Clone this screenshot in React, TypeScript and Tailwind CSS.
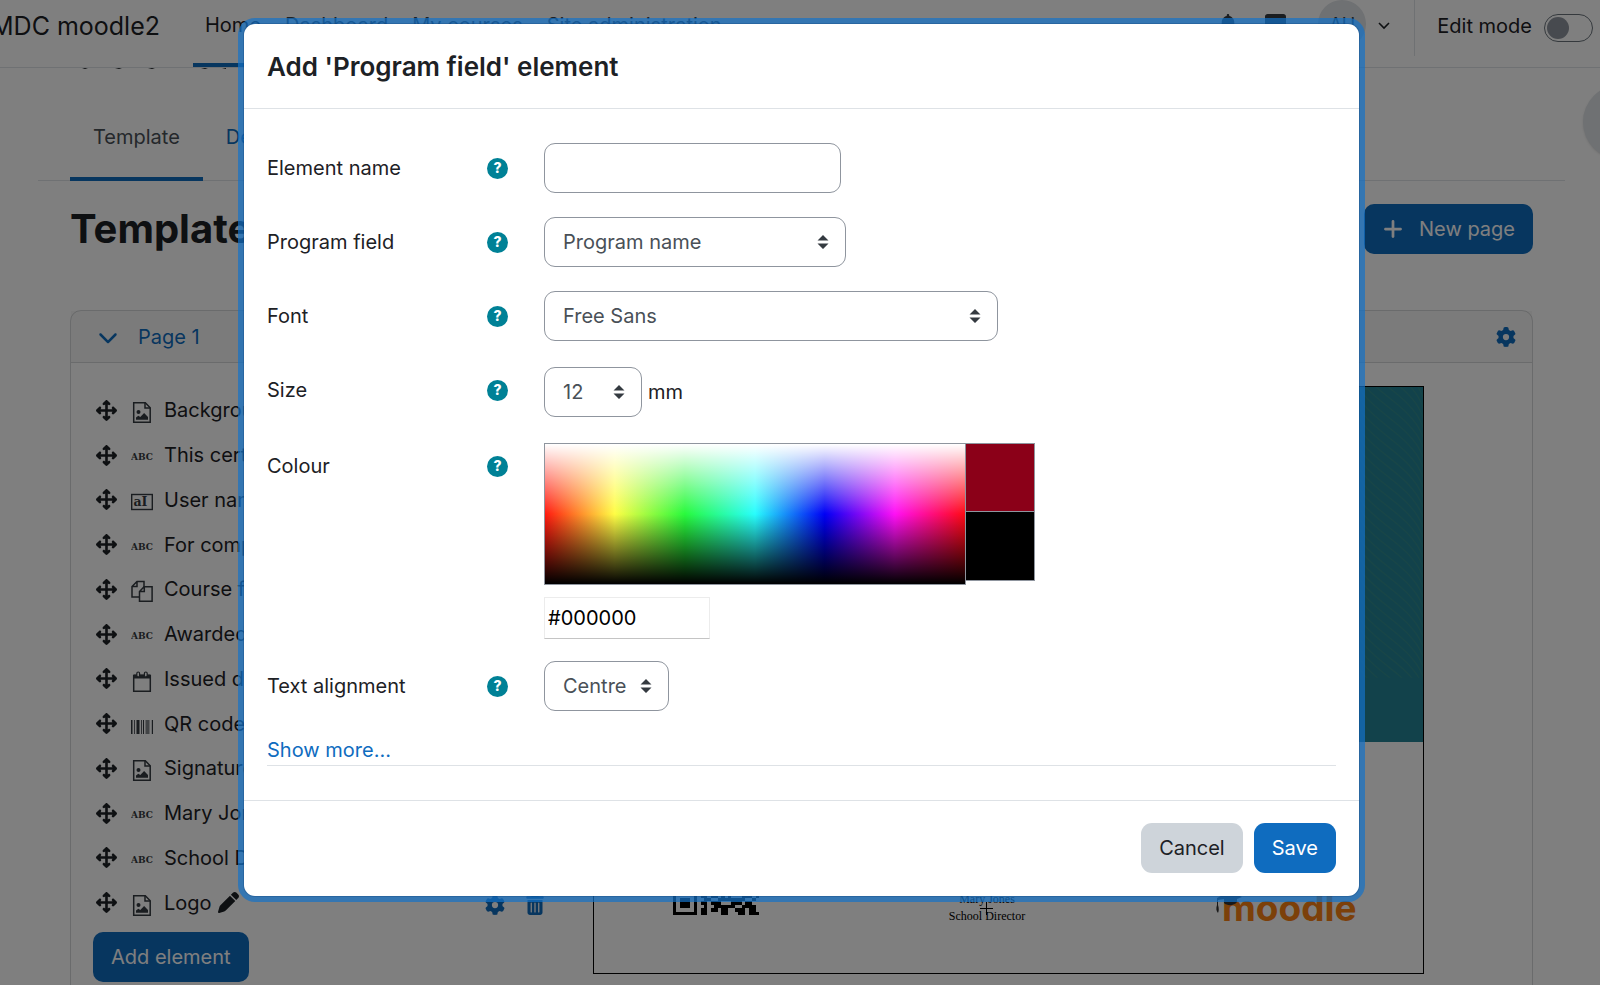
import { useState, type ReactNode } from 'react';
import {
    FaArrowsUpDownLeftRight,
    FaBell,
    FaChevronDown,
    FaGear,
    FaMessage,
    FaPen,
    FaPlus,
    FaTrashCan,
} from 'react-icons/fa6';

type ElementType = 'image' | 'text' | 'user' | 'course' | 'date' | 'code';

const NAV_ITEMS = ['Home', 'Dashboard', 'My courses', 'Site administration'];

const ELEMENTS: { type: ElementType; name: string }[] = [
    { type: 'image', name: 'Background' },
    { type: 'text', name: 'This certifies' },
    { type: 'user', name: 'User name' },
    { type: 'text', name: 'For completing' },
    { type: 'course', name: 'Course full name' },
    { type: 'text', name: 'Awarded on' },
    { type: 'date', name: 'Issued date' },
    { type: 'code', name: 'QR code' },
    { type: 'image', name: 'Signature' },
    { type: 'text', name: 'Mary Jones' },
    { type: 'text', name: 'School Director' },
    { type: 'image', name: 'Logo' },
];

const QR_ROWS = [
    '1111111011010010101111111',
    '1000001001100111001000001',
    '1011101010011010101011101',
    '1011101001101101001011101',
    '1011101011010011001011101',
    '1000001000110100101000001',
    '1111111010101010101111111',
    '0000000011001101000000000',
    '1101101100110010110101101',
    '0110010111010110011010010',
    '1011011001101001110110110',
    '0100110110011100101001011',
    '1110101001110011010111001',
    '0011010110101100111010110',
    '1010111011010111001101101',
    '0101001100101001110010110',
    '1101011001110110111111001',
    '0000000010100110100010100',
    '1111111001110101101011010',
    '1000001011011010100011101',
    '1011101001100111111110010',
    '1011101011011100011101100',
    '1011101001001111110011110',
    '1000001011011011001110110',
    '1111111011000011000110111',
];

const TypeIcon = ({ type }: { type: ElementType }) => {
    if (type === 'text') {
        return (
            <svg viewBox="0 0 22 22" className="size-[22px] text-[#343a40]">
                <text x="11" y="14" textAnchor="middle" fontSize="9" fontWeight="700" fontFamily="DejaVu Serif, serif" fill="currentColor">ABC</text>
            </svg>
        );
    }
    if (type === 'user') {
        return (
            <svg viewBox="0 0 22 22" className="size-[22px] text-[#343a40]">
                <rect x="0.7" y="3.5" width="20.6" height="15" fill="none" stroke="currentColor" strokeWidth="1.4" />
                <text x="9.500" y="15" textAnchor="middle" fontSize="12.500" fontWeight="700" fontFamily="DejaVu Serif, serif" fill="currentColor">aI</text>
            </svg>
        );
    }
    return (
        <svg viewBox="0 0 22 22" fill="none" stroke="currentColor" strokeWidth="1.5" className="size-[22px] text-[#343a40]">
            {type === 'image' && (
                <>
                    <path d="M2.7 1.8h11.6l4.9 4.9v14.5H2.7z" />
                    <path d="M14 1.8v5.2h5.2" />
                    <circle cx="7.5" cy="11" r="2" fill="currentColor" stroke="none" />
                    <path d="M5 18.8v-2.3l2.3-1.8 2 1.3 3.8-4 3.9 4v2.8z" fill="currentColor" stroke="none" />
                </>
            )}
            {type === 'course' && (
                <>
                    <path d="M8 17H1V6.500L6 1.500h7v5.500M6 1.500v5H1" />
                    <path d="M8.500 11.500v9.700h12.600V6.800h-8zM13.300 6.800v4.700H8.500" />
                </>
            )}
            {type === 'date' && (
                <>
                    <path d="M2.700 5.500h16.600v15.700H2.700z" />
                    <path d="M2.700 4.500h16.600v4H2.700z" fill="currentColor" stroke="none" />
                    <rect x="5.800" y="2" width="2.800" height="5" rx="1.400" fill="#fff" strokeWidth="1.200" />
                    <rect x="13.400" y="2" width="2.800" height="5" rx="1.400" fill="#fff" strokeWidth="1.200" />
                </>
            )}
            {type === 'code' && (
                <g fill="currentColor" stroke="none">
                    <path d="M0 5h1.500v14H0zM3 5h.8v14H3zM5.500 5h3v14h-3zM10 5h.8v14H10zM12 5h1v14h-1zM20.800 5H22v14h-1.200z" />
                    <path d="M14.500 5h4v14h-4z" opacity="0.6" />
                </g>
            )}
        </svg>
    );
};

const TopBar = () => (
    <header className="flex h-[68px] items-start justify-between border-b border-[#dee2e6] bg-white">
        <div className="flex">
            <a href="#" className="-ml-[9px] w-[202px] pr-[33px] text-right text-[25px] leading-[52px] whitespace-nowrap">MDC moodle2</a>
            <nav className="flex">
                {NAV_ITEMS.map((item, i) => (
                    <a
                        key={item}
                        href="#"
                        className={`h-[67px] px-3 text-[20px] leading-[50px] whitespace-nowrap ${i === 0 ? 'border-b-4 border-[#0f6cbf]' : 'text-[#3c4349]'}`}
                    >
                        {item}
                    </a>
                ))}
            </nav>
        </div>
        <div className="flex items-start">
            <div className="flex h-12 items-center">
                <FaBell className="mr-[27px] size-5 text-[#343a40]" />
                <FaMessage className="mr-8 size-[21px] text-[#343a40]" />
                <span className="flex size-12 items-center justify-center rounded-full bg-[#dee2e6] text-[18px] text-[#343a40]">AU</span>
                <svg viewBox="0 0 12 8" className="mt-1 ml-3 h-2 w-3" fill="none" stroke="currentColor" strokeWidth="1.600">
                    <path d="M1 1l5 5 5-5" />
                </svg>
            </div>
            <div className="ml-6 flex h-14 items-center border-l border-[#dee2e6] pr-[7px] pl-[22px]">
                <label className="flex items-center gap-3 pb-1 text-[20px] leading-[50px]">
                    Edit mode
                    <span className="relative flex items-center pt-1">
                        <input type="checkbox" className="h-7 w-[49px] appearance-none rounded-full border border-[#6a737b] bg-white" />
                        <span className="pointer-events-none absolute left-[3px] size-[22px] rounded-full bg-[#8f959e]" />
                    </span>
                </label>
            </div>
        </div>
    </header>
);

const CertificatePreview = () => (
    <div className="relative h-[588px] w-[831px] shrink-0 overflow-hidden border border-black bg-white">
        <svg viewBox="0 0 830 355" className="block h-[355px] w-full bg-[#248597]">
            {Array.from({ length: 42 }, (_, i) => (
                <path
                    key={i}
                    d={`M740 ${i * 10 - 150}c30 50 32 52 58 72s30 30 40 58`}
                    fill="none"
                    stroke="#328c8f"
                    strokeWidth="1.300"
                    clipPath="url(#waves)"
                />
            ))}
            <clipPath id="waves">
                <rect width="830" height="291" />
            </clipPath>
        </svg>
        <svg viewBox="0 0 25 25" shapeRendering="crispEdges" className="absolute top-[442px] left-[79px] size-[86px]">
            {QR_ROWS.map((row, y) => row.split('').map((c, x) => c === '1' && <rect key={`${x}-${y}`} x={x} y={y} width="1" height="1" />))}
        </svg>
        <div className="absolute top-[504px] left-[318px] w-[150px] text-center font-['Liberation_Serif',serif] text-[12px] leading-[17px] text-black">
            <p>Mary Jones</p>
            <p>School Director</p>
        </div>
        <svg viewBox="0 0 13 13" className="absolute top-[515px] left-[386px] size-[13px]" stroke="#000">
            <path d="M6.500 0v13M0 6.500h13" />
        </svg>
        <div className="absolute top-[497px] left-[628px] font-['Inter',sans-serif] text-[37px] leading-[48px] font-bold text-[#f98012]">moodle</div>
        <svg viewBox="0 0 26 30" className="absolute top-[503px] left-[622px] h-[30px] w-[26px]" fill="#333">
            <path d="M1 8L14 1l12 6-5 2v3c-3 4-10 4-13 1V9L2 10v5c1 3 1 6 0 8C0 21 0 18 1 15z" />
        </svg>
    </div>
);

const TemplatePage = () => (
    <div className="h-full overflow-hidden">
        <TopBar />
        <div className="pr-[35px] pl-[38px]">
            <svg viewBox="0 0 160 2" className="ml-[42px] block h-0.5 w-40" fill="#1d2125">
                <path d="M2 0h6l-3 1zM35 0h7l-3 1zM68 0h7l-3 1zM121 0h7l-3 1zM142 0h4v1z" />
            </svg>
            <nav className="mt-[17px] flex h-[94px] border-b border-[#dee2e6] pl-8">
                <a href="#" className="h-[94px] border-b-4 border-[#0f6cbf] px-[23px] text-[20px] leading-[100px] text-[#495057]">Template</a>
                <a href="#" className="h-[94px] px-[23px] text-[20px] leading-[100px] text-[#0f6cbf]">Details</a>
            </nav>
            <div className="mr-8 ml-8 flex items-center justify-between pt-[23px]">
                <h1 className="text-[40px] leading-[50px] font-bold">Template</h1>
                <button className="flex h-[50px] items-center gap-[15px] rounded-[10px] bg-[#0f6cbf] px-[18px] text-[20px] text-white">
                    <FaPlus className="size-[22px]" />
                    New page
                </button>
            </div>
            <section className="mx-8 mt-14 rounded-[11px] border border-[#d5d7d9]">
                <div className="flex h-[52px] items-center justify-between border-b border-[#d5d7d9] bg-black/3 px-4 pl-[27px]">
                    <a href="#" className="flex items-center gap-5 text-[20px] text-[#0f6cbf]">
                        <FaChevronDown className="size-5" />
                        Page 1
                    </a>
                    <FaGear className="size-5 text-[#0f6cbf]" />
                </div>
                <div className="flex px-[22px] pt-[23px] pb-6">
                    <div className="w-[500px] shrink-0 pt-0.5 pr-12">
                        <ul className="grid h-[537px] auto-rows-fr">
                            {ELEMENTS.map(({ type, name }) => (
                                <li key={name} className="flex items-center pl-[3px] text-[20px]">
                                    <FaArrowsUpDownLeftRight className="mr-[14px] size-[21px]" />
                                    <span className="mt-1 mr-[11px]"><TypeIcon type={type} /></span>
                                    {name}
                                    <FaPen className="ml-1.5 size-[21px]" />
                                    <FaGear className="mt-1 ml-auto size-5 text-[#0f6cbf]" />
                                    <FaTrashCan className="mt-1 ml-5 size-5 text-[#0f6cbf]" />
                                </li>
                            ))}
                        </ul>
                        <button className="mt-[7px] h-[50px] rounded-[10px] bg-[#0f6cbf] px-[18px] text-[20px] text-white">Add element</button>
                    </div>
                    <CertificatePreview />
                </div>
            </section>
        </div>
        <button aria-label="Open block drawer" className="absolute top-[85px] -right-[57px] size-[74px] rounded-full bg-[#dee2e6] shadow" />
    </div>
);

const FormRow = ({ id, label, children }: { id: string; label: string; children: ReactNode }) => (
    <div className="flex items-start">
        <div className="flex h-[50px] w-[277px] shrink-0 items-center justify-between pr-9">
            <label htmlFor={id}>{label}</label>
            <button
                type="button"
                aria-label={`Help with ${label}`}
                className="flex size-[21px] items-center justify-center rounded-full bg-[#008196] text-[14px] leading-none font-extrabold text-white"
            >
                ?
            </button>
        </div>
        {children}
    </div>
);

const SelectBox = ({ id, width, options }: { id: string; width: string; options: string[] }) => (
    <div className={`relative ${width}`}>
        <select id={id} className="h-[50px] w-full appearance-none rounded-[11px] border border-[#8f959e] bg-white pl-[18px] text-[#495057]">
            {options.map(option => <option key={option}>{option}</option>)}
        </select>
        <svg viewBox="0 0 12 14" className="pointer-events-none absolute top-[18px] right-[17px] h-[14px] w-3" fill="#343a40">
            <path d="M6 0l5.500 5.500H.5zM6 14l5.500-5.500H.5z" />
        </svg>
    </div>
);

const ColourPicker = () => {
    const [colour, setColour] = useState('#000000');

    return (
        <div className="-mb-0.5 pt-0.5">
            <div className="flex items-start">
                <div className="h-[142px] w-[422px] border border-[#8f959e] bg-[linear-gradient(to_bottom,#fff_0%,#fff0_50%,#0000_50%,#000_100%),linear-gradient(to_right,#ff1a10,#fffd45_16.600%,#28fa3c_33.300%,#28fdfd_50%,#0000f5_66.600%,#ff10f5_83.300%,#ff0a14)]" />
                <div className="w-[69px] border border-l-0 border-[#8f959e]">
                    <div className="h-[68px] border-b border-[#8f959e] bg-[#8b0018]" />
                    <div className="h-[68px] bg-black" />
                </div>
            </div>
            <input
                id="colour"
                value={colour}
                onChange={e => setColour(e.target.value)}
                className="mt-3 block h-[42px] w-[166px] border border-[#ececec] border-b-[#c4c4c4] bg-white px-[3px] text-black"
            />
        </div>
    );
};

const ElementModal = () => (
    <div
        role="dialog"
        aria-labelledby="modal-title"
        className="w-full max-w-[1115px] rounded-[11px] bg-white text-[20px] leading-[30px] shadow-[0_0_0_1px_rgba(0,40,90,0.200),0_0_0_6px_rgba(20,114,200,0.700)]"
    >
        <div className="border-b border-[#dee2e6] px-[23px] pt-6 pb-[23px]">
            <h2 id="modal-title" className="text-[26px] leading-[37px] font-semibold">Add 'Program field' element</h2>
        </div>
        <form className="px-[23px] pt-[34px] pb-[34px]">
            <div className="flex flex-col gap-6">
                <FormRow id="name" label="Element name">
                    <input id="name" className="h-[50px] w-[297px] rounded-[11px] border border-[#8f959e] px-[17px]" />
                </FormRow>
                <FormRow id="field" label="Program field">
                    <SelectBox id="field" width="w-[302px]" options={['Program name']} />
                </FormRow>
                <FormRow id="font" label="Font">
                    <SelectBox id="font" width="w-[454px]" options={['Free Sans']} />
                </FormRow>
                <FormRow id="size" label="Size">
                    <div className="flex items-center gap-1.5 pt-0.5">
                        <SelectBox id="size" width="w-[98px]" options={['12']} />
                        mm
                    </div>
                </FormRow>
                <FormRow id="colour" label="Colour">
                    <ColourPicker />
                </FormRow>
                <FormRow id="align" label="Text alignment">
                    <SelectBox id="align" width="w-[125px]" options={['Centre']} />
                </FormRow>
            </div>
            <div className="mt-6 border-b border-[#dee2e6]">
                <a href="#" className="text-[#0f6cbf]">Show more...</a>
            </div>
        </form>
        <div className="flex justify-end gap-[11px] border-t border-[#dee2e6] px-[23px] pt-[22px] pb-[23px]">
            <button className="h-[50px] rounded-[11px] bg-[#ced4da] px-[18px]">Cancel</button>
            <button className="h-[50px] rounded-[11px] bg-[#0f6cbf] px-[18px] text-white">Save</button>
        </div>
    </div>
);

export default function App() {
    return (
        <div className="relative h-screen overflow-hidden bg-white font-['Inter','Liberation_Sans',sans-serif] text-[#1d2125]">
            <TemplatePage />
            <div className="absolute inset-0 flex items-start justify-center bg-black/50 pt-6 pl-[3px]">
                <ElementModal />
            </div>
        </div>
    );
}
